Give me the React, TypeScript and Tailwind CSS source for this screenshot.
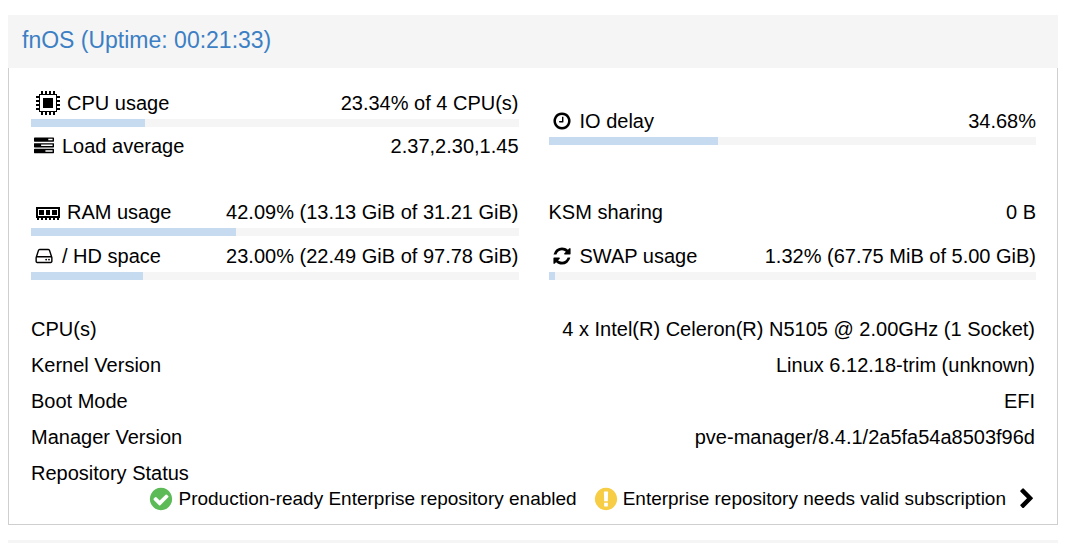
import type { ReactNode } from "react";

// Font Awesome 4 glyph outlines, all on a 1792 grid
const glyphs = {
  tasks:
    "M1024 1408h640v-128h-640v128zm-384-512h1024v-128h-1024v128zm640-512h384v-128h-384v128zm512 832v256q0 26-19 45t-45 19h-1664q-26 0-45-19t-19-45v-256q0-26 19-45t45-19h1664q26 0 45 19t19 45zm0-512v256q0 26-19 45t-45 19h-1664q-26 0-45-19t-19-45v-256q0-26 19-45t45-19h1664q26 0 45 19t19 45zm0-512v256q0 26-19 45t-45 19h-1664q-26 0-45-19t-19-45v-256q0-26 19-45t45-19h1664q26 0 45 19t19 45z",
  clock:
    "M1024 544v448q0 14-9 23t-23 9h-320q-14 0-23-9t-9-23v-64q0-14 9-23t23-9h224v-352q0-14 9-23t23-9h64q14 0 23 9t9 23zm416 352q0-148-73-273t-198-198-273-73-273 73-198 198-73 273 73 273 198 198 273 73 273-73 198-198 73-273zm224 0q0 209-103 385.5t-279.5 279.5-385.5 103-385.5-103-279.5-279.5-103-385.5 103-385.5 279.5-279.5 385.5-103 385.5 103 279.5 279.5 103 385.5z",
  hdd: "M1168 1216q0 33-23.5 56.5t-56.5 23.5-56.5-23.5-23.5-56.5 23.5-56.5 56.5-23.5 56.5 23.5 23.5 56.5zm256 0q0 33-23.5 56.5t-56.5 23.5-56.5-23.5-23.5-56.5 23.5-56.5 56.5-23.5 56.5 23.5 23.5 56.5zm112 160v-320q0-13-9.5-22.5t-22.5-9.5h-1216q-13 0-22.5 9.5t-9.5 22.5v320q0 13 9.5 22.5t22.5 9.5h1216q13 0 22.5-9.5t9.5-22.5zm-1230-480h1180l-157-482q-4-13-16-21.5t-26-8.5h-782q-14 0-26 8.5t-16 21.5zm1358 160v320q0 66-47 113t-113 47h-1216q-66 0-113-47t-47-113v-320q0-25 16-75l197-606q17-53 63-86t101-33h782q55 0 101 33t63 86l197 606q16 50 16 75z",
  refresh:
    "M1639 1056q0 5-1 7-64 268-268 434.5t-478 166.5q-146 0-282.5-55t-243.5-157l-129 129q-19 19-45 19t-45-19-19-45v-448q0-26 19-45t45-19h448q26 0 45 19t19 45-19 45l-137 137q71 66 161 102t187 36q134 0 250-65t186-179q11-17 53-117 8-23 30-23h192q13 0 22.5 9.5t9.5 22.5zm25-800v448q0 26-19 45t-45 19h-448q-26 0-45-19t-19-45 19-45l138-138q-148-137-349-137-134 0-250 65t-186 179q-11 17-53 117-8 23-30 23h-199q-13 0-22.5-9.5t-9.5-22.5v-7q65-268 270-434.5t480-166.5q146 0 284 55.5t245 156.5l130-129q19-19 45-19t45 19 19 45z",
  check:
    "M1412 734q0-28-18-46l-91-90q-19-19-45-19t-45 19l-408 407-226-226q-19-19-45-19t-45 19l-91 90q-18 18-18 46 0 27 18 45l362 362q19 19 45 19 27 0 46-19l543-543q18-18 18-45zm252 162q0 209-103 385.5t-279.5 279.5-385.5 103-385.5-103-279.5-279.5-103-385.5 103-385.5 279.5-279.5 385.5-103 385.5 103 279.5 279.5 103 385.5z",
  warning:
    "M896 128q209 0 385.5 103t279.5 279.5 103 385.5-103 385.5-279.5 279.5-385.5 103-385.5-103-279.5-279.5-103-385.5 103-385.5 279.5-279.5 385.5-103zm128 1247v-190q0-14-9-23.5t-22-9.5h-192q-13 0-23 10t-10 23v190q0 13 10 23t23 10h192q13 0 22-9.5t9-23.5zm-2-344l18-621q0-12-10-18-10-8-24-8h-220q-14 0-24 8-10 6-10 18l17 621q0 10 10 17.5t24 7.5h185q14 0 23.5-7.5t10.5-17.5z",
  chevron:
    "M1363 877l-742 742q-19 19-45 19t-45-19l-166-166q-19-19-19-45t19-45l531-531-531-531q-19-19-19-45t19-45l166-166q19-19 45-19t45 19l742 742q19 19 19 45t-19 45z",
};

function Glyph({ name, className }: { name: keyof typeof glyphs; className: string }) {
  return (
    <svg viewBox="0 0 1792 1792" fill="currentColor" aria-hidden="true" className={`shrink-0 ${className}`}>
      <path d={glyphs[name]} />
    </svg>
  );
}

function CpuIcon() {
  return (
    <svg viewBox="0 0 24 24" aria-hidden="true" shapeRendering="crispEdges" className="mr-[7px] ml-[5px] size-6 shrink-0">
      <path fillRule="evenodd" d="M3 3h18v18H3zM4 4v16h16V4z" />
      <rect x="7" y="7" width="10" height="10" />
      <path d="M5 0h2v3H5zM9 0h2v3H9zM13 0h2v3h-2zM17 0h2v3h-2zM5 21h2v3H5zM9 21h2v3H9zM13 21h2v3h-2zM17 21h2v3h-2zM0 5h3v2H0zM0 9h3v2H0zM0 13h3v2H0zM0 17h3v2H0zM21 5h3v2h-3zM21 9h3v2h-3zM21 13h3v2h-3zM21 17h3v2h-3z" />
    </svg>
  );
}

function RamIcon() {
  return (
    <svg viewBox="0 0 24 14" aria-hidden="true" shapeRendering="crispEdges" className="mt-1 mr-[7px] ml-[5px] h-3.5 w-6 shrink-0">
      <path fillRule="evenodd" d="M0 0h24v11H0zM2 2v7h20V2z" />
      <path d="M3 3h5v5H3zM10 3h4v5h-4zM16 3h5v5h-5zM1 11h2v2H1zM5 11h2v2H5zM9 11h2v2H9zM13 11h2v2h-2zM17 11h2v2h-2zM21 11h2v2h-2z" />
    </svg>
  );
}

type StatProps = {
  icon?: ReactNode;
  label: string;
  value: string;
  percent?: number;
};

function Stat({ icon, label, value, percent }: StatProps) {
  return (
    <div>
      <div className="flex items-center justify-between leading-6">
        <span className="flex items-center">
          {icon}
          {label}
        </span>
        <span>{value}</span>
      </div>
      {percent !== undefined && (
        <div
          role="progressbar"
          aria-label={label}
          aria-valuenow={percent}
          aria-valuemin={0}
          aria-valuemax={100}
          className="mt-1 h-2 bg-[#f5f5f5]"
        >
          <div className="h-full bg-[#c6daf0]" style={{ width: `${percent}%` }} />
        </div>
      )}
    </div>
  );
}

const info = [
  { label: "CPU(s)", value: "4 x Intel(R) Celeron(R) N5105 @ 2.00GHz (1 Socket)" },
  { label: "Kernel Version", value: "Linux 6.12.18-trim (unknown)" },
  { label: "Boot Mode", value: "EFI" },
  { label: "Manager Version", value: "pve-manager/8.4.1/2a5fa54a8503f96d" },
  { label: "Repository Status", value: "" },
];

export default function App() {
  return (
    <main className="bg-white px-2 pt-[15px] pr-3 font-['Liberation_Sans',Arial,sans-serif] text-xl text-black">
      <section>
        <h1 className="bg-[#f5f5f5] px-3.5 pt-[9px] pb-3 text-[23px] leading-8 text-[#3c7fc4]">
          fnOS (Uptime: 00:21:33)
        </h1>
        <div className="border border-t-0 border-[#cfcfcf] pt-[23px] pr-[21px] pb-3 pl-[22px]">
          <div className="grid grid-cols-2 gap-x-[30px]">
            <div className="space-y-[7px]">
              <Stat icon={<CpuIcon />} label="CPU usage" value="23.34% of 4 CPU(s)" percent={23.34} />
              <Stat
                icon={<Glyph name="tasks" className="mr-2 ml-[3px] size-5" />}
                label="Load average"
                value="2.37,2.30,1.45"
              />
            </div>
            <div className="pt-[18px]">
              <Stat
                icon={<Glyph name="clock" className="mr-2 ml-[3px] size-5" />}
                label="IO delay"
                value="34.68%"
                percent={34.68}
              />
            </div>
          </div>

          <div className="mt-[42px] grid grid-cols-2 gap-x-[30px] gap-y-2">
            <Stat
              icon={<RamIcon />}
              label="RAM usage"
              value="42.09% (13.13 GiB of 31.21 GiB)"
              percent={42.09}
            />
            <Stat label="KSM sharing" value="0 B" />
            <Stat
              icon={<Glyph name="hdd" className="mr-2 ml-[3px] size-5" />}
              label="/ HD space"
              value="23.00% (22.49 GiB of 97.78 GiB)"
              percent={23}
            />
            <Stat
              icon={<Glyph name="refresh" className="mr-2 ml-[3px] size-5" />}
              label="SWAP usage"
              value="1.32% (67.75 MiB of 5.00 GiB)"
              percent={1.32}
            />
          </div>

          <dl className="mt-[31px] pr-px">
            {info.map((row) => (
              <div key={row.label} className="flex justify-between leading-9">
                <dt>{row.label}</dt>
                <dd>{row.value}</dd>
              </div>
            ))}
          </dl>

          <div className="-mt-[5px] flex items-center justify-end text-[19px] leading-6">
            <Glyph name="check" className="mr-1 size-[26px] text-[#5cbb57]" />
            <span>Production-ready Enterprise repository enabled</span>
            <Glyph name="warning" className="mr-1 ml-4 size-[26px] text-[#f8cd46]" />
            <span>Enterprise repository needs valid subscription</span>
            <button type="button" aria-label="Open repositories" className="-mr-0.5 ml-2.5">
              <Glyph name="chevron" className="size-[22px]" />
            </button>
          </div>
        </div>
      </section>
      <div className="mt-[15px] h-[3px] bg-[#f5f5f5]" />
    </main>
  );
}
